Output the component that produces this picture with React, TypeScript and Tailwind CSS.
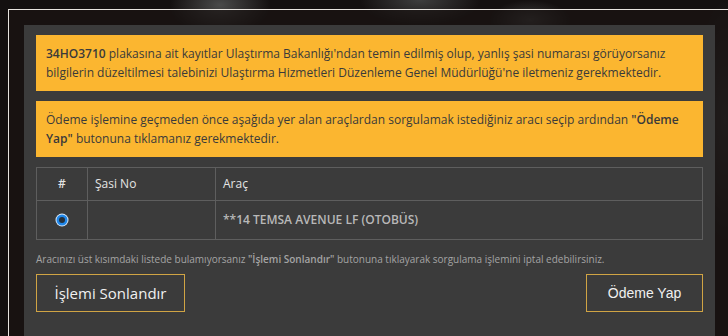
import React from 'react';

const openSans = "font-['Open_Sans',sans-serif]";

function Radio() {
  return (
    <svg width="14" height="14" viewBox="0 0 14 14">
      <circle cx="7" cy="7" r="6.5" fill="#d8e8f8" />
      <circle cx="7" cy="7" r="5.5" fill="#1f86e8" />
      <circle cx="7" cy="7" r="3" fill="#24303c" />
    </svg>
  );
}

export default function App() {
  return (
    <div
      className={`w-[728px] h-[336px] overflow-hidden bg-[#141010] ${openSans} bg-[radial-gradient(ellipse_50px_30px_at_220px_5px,#4a4a4a,transparent),radial-gradient(ellipse_60px_25px_at_420px_0px,#3e3e3e,transparent),radial-gradient(ellipse_40px_20px_at_530px_20px,#3a3a3a,transparent),radial-gradient(ellipse_30px_120px_at_725px_120px,#303030,transparent)]`}
    >
      <div className="ml-[8px] mt-[9px] h-[327px] border-t border-l border-[#e8e4e0] bg-[#1a1412]/70 pt-[15px] pl-[15px]">
        <div className="w-[691px] h-[311px] bg-[#3b3b3b] px-[12px] pt-[10px]">
          <div className="bg-[#fbb630] text-[#3a3a3a] text-[12px] leading-[19px] px-[10px] py-[9px]">
            <b className="font-semibold">34HO3710</b> plakasına ait kayıtlar Ulaştırma Bakanlığı'ndan temin edilmiş olup, yanlış şasi numarası görüyorsanız bilgilerin düzeltilmesi talebinizi Ulaştırma Hizmetleri Düzenleme Genel Müdürlüğü'ne iletmeniz gerekmektedir.
          </div>
          <div className="mt-[10px] bg-[#fbb630] text-[#3a3a3a] text-[12px] leading-[19px] px-[10px] py-[9px]">
            Ödeme işlemine geçmeden önce aşağıda yer alan araçlardan sorgulamak istediğiniz aracı seçip ardından <b className="font-semibold">"Ödeme Yap"</b> butonuna tıklamanız gerekmektedir.
          </div>
          <table className="mt-[10px] w-full border-collapse text-[12px]">
            <thead>
              <tr className="h-[33px] text-[#e4e4e4]">
                <th className="w-[51px] border border-[#5e5e5e] font-semibold text-center">#</th>
                <th className="w-[128px] border border-[#5e5e5e] font-normal text-left pl-[7px]">Şasi No</th>
                <th className="border border-[#5e5e5e] font-normal text-left pl-[7px]">Araç</th>
              </tr>
            </thead>
            <tbody>
              <tr className="h-[39px] text-[#b8b8b8]">
                <td className="border border-[#5e5e5e]">
                  <div className="flex justify-center">
                    <Radio />
                  </div>
                </td>
                <td className="border border-[#5e5e5e]"></td>
                <td className="border border-[#5e5e5e] pl-[7px] font-semibold">**14 TEMSA AVENUE LF (OTOBÜS)</td>
              </tr>
            </tbody>
          </table>
          <p className="mt-[12px] text-[10px] text-[#a4a4a4] leading-[14px]">
            Aracınızı üst kısımdaki listede bulamıyorsanız <b className="font-semibold">"İşlemi Sonlandır"</b> butonuna tıklayarak sorgulama işlemini iptal edebilirsiniz.
          </p>
          <div className="mt-[8px] flex justify-between">
            <button className="h-[38px] w-[149px] border border-[#d0a444] text-[15px] text-[#f0f0f0]">
              İşlemi Sonlandır
            </button>
            <button className="h-[38px] w-[117px] border border-[#d0a444] text-[14px] text-[#f0f0f0] font-['Liberation_Sans',Arial,sans-serif]">
              Ödeme Yap
            </button>
          </div>
        </div>
      </div>
    </div>
  );
}
